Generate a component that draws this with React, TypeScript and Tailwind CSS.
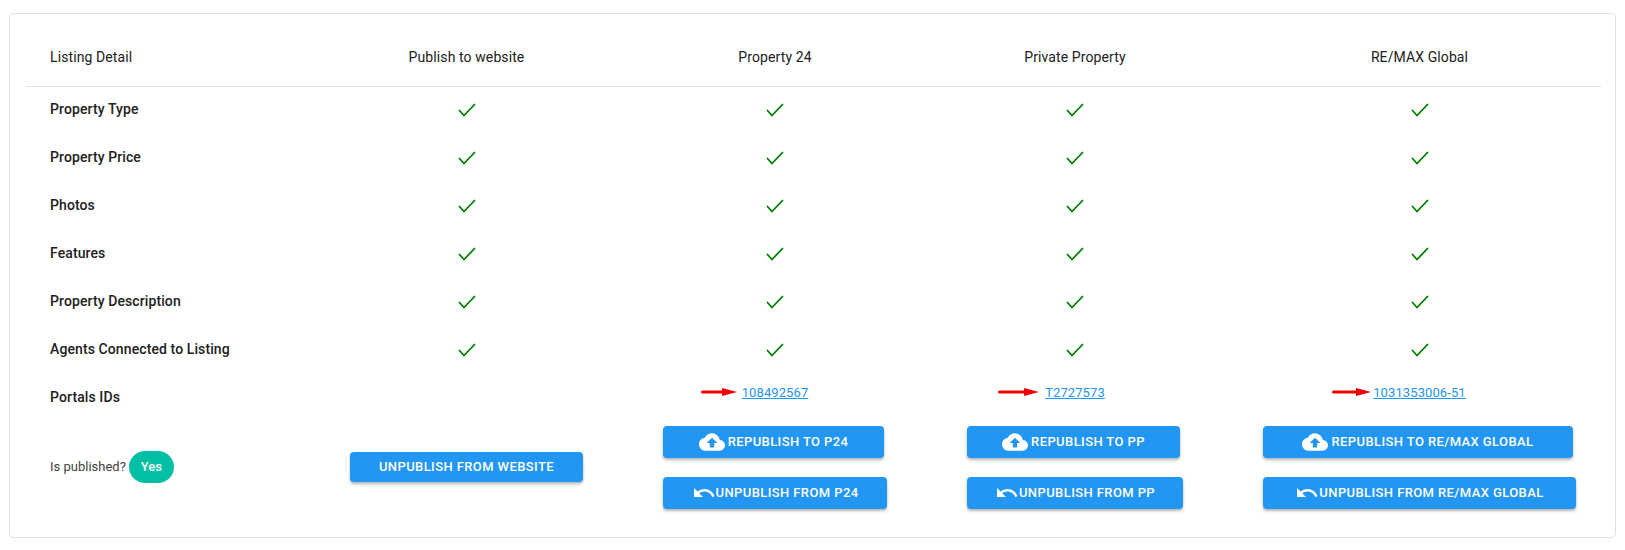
import { MdCloudUpload, MdUndo } from "react-icons/md";

const rows = [
  "Property Type",
  "Property Price",
  "Photos",
  "Features",
  "Property Description",
  "Agents Connected to Listing",
];

function CheckMark() {
  return (
    <svg width="18" height="14" viewBox="0 0 18 14" className="mx-auto block" fill="none">
      <path d="M1 7 L6 12.5 L17 1" stroke="#008000" strokeWidth="1.8" />
    </svg>
  );
}

function RedArrow({ gap, length }: { gap: string; length: number }) {
  return (
    <svg
      width={length}
      height="10"
      viewBox={`0 0 ${length} 10`}
      className={`absolute top-1/2 -translate-y-1/2 ${gap}`}
    >
      <path
        d={`M1.5 3.5 H${length - 15} V1 L${length} 5 L${length - 15} 9 V6.5 H1.5 A1.5 1.5 0 0 1 1.5 3.5 Z`}
        fill="#f00000"
      />
    </svg>
  );
}

function PortalLink({ id, gap, length }: { id: string; gap: string; length: number }) {
  return (
    <span className="relative inline-block">
      <RedArrow gap={gap} length={length} />
      <a href="#" className="text-[13px] text-[#2196f3] underline">
        {id}
      </a>
    </span>
  );
}

function ActionButton({
  label,
  icon,
  width,
}: {
  label: string;
  icon?: "cloud" | "undo";
  width: string;
}) {
  return (
    <button
      className={`flex h-[32px] items-center justify-center rounded bg-[#2196f3] text-[13px] font-medium tracking-[0.4px] text-white uppercase shadow-[0_2px_3px_rgba(0,0,0,0.3)] ${width}`}
    >
      {icon === "cloud" && <MdCloudUpload size={26} className="mr-[3px]" />}
      {icon === "undo" && <MdUndo size={24} />}
      {label}
    </button>
  );
}

export default function App() {
  return (
    <div className="bg-white pt-[13px] pr-[9px] pb-[13px] pl-[9px] font-['Roboto',sans-serif] text-[14px] tracking-[0.1px] text-[#212121]">
      <div className="h-[525px] rounded-[5px] border border-[#e0e0e0] pt-[14px] pl-[16px]">
        <table className="w-[1575px] table-fixed border-collapse">
          <colgroup>
            <col className="w-[284px]" />
            <col className="w-[313px]" />
            <col className="w-[304px]" />
            <col className="w-[296px]" />
            <col />
          </colgroup>
          <thead>
            <tr className="h-[58px] border-b border-[#e0e0e0]">
              <th className="pt-[2px] pl-[24px] text-left font-[450]">Listing Detail</th>
              <th className="pt-[2px] font-[450]">Publish to website</th>
              <th className="pt-[2px] font-[450]">Property 24</th>
              <th className="pt-[2px] font-[450]">Private Property</th>
              <th className="pt-[2px] pl-[15px] font-[450]">RE/MAX Global</th>
            </tr>
          </thead>
          <tbody>
            {rows.map((row) => (
              <tr key={row} className="h-[48px]">
                <td className="pb-[1px] pl-[24px] font-medium">{row}</td>
                <td><CheckMark /></td>
                <td><CheckMark /></td>
                <td><CheckMark /></td>
                <td className="pl-[15px]"><CheckMark /></td>
              </tr>
            ))}
            <tr className="h-[52px]">
              <td className="pb-[6px] pl-[24px] font-medium">Portals IDs</td>
              <td />
              <td className="pb-[16px] text-center">
                <PortalLink id="108492567" gap="right-[calc(100%+5px)]" length={36} />
              </td>
              <td className="pb-[16px] text-center">
                <PortalLink id="T2727573" gap="right-[calc(100%+6px)]" length={41} />
              </td>
              <td className="pb-[16px] pl-[15px] text-center">
                <PortalLink id="1031353006-51" gap="right-[calc(100%+2px)]" length={39} />
              </td>
            </tr>
            <tr>
              <td className="pb-[2px] pl-[24px]">
                <div className="flex items-center gap-[3px] text-[13px] tracking-normal text-[#424242]">
                  Is published?
                  <span className="flex h-[32px] w-[45px] items-center justify-center rounded-full bg-[#00bfa5] text-[13px] font-medium text-white">
                    Yes
                  </span>
                </div>
              </td>
              <td className="pb-[2px] pl-[40px]">
                <ActionButton label="Unpublish from website" width="w-[233px] !h-[30px]" />
              </td>
              <td className="pl-[40px]">
                <div className="flex flex-col gap-[19px]">
                  <ActionButton label="Republish to P24" icon="cloud" width="w-[221px]" />
                  <ActionButton label="Unpublish from P24" icon="undo" width="w-[224px]" />
                </div>
              </td>
              <td className="pl-[40px]">
                <div className="flex flex-col gap-[19px]">
                  <ActionButton label="Republish to PP" icon="cloud" width="w-[213px]" />
                  <ActionButton label="Unpublish from PP" icon="undo" width="w-[216px]" />
                </div>
              </td>
              <td className="pl-[40px]">
                <div className="flex flex-col gap-[19px]">
                  <ActionButton label="Republish to RE/MAX Global" icon="cloud" width="w-[310px]" />
                  <ActionButton label="Unpublish from RE/MAX Global" icon="undo" width="w-[313px]" />
                </div>
              </td>
            </tr>
          </tbody>
        </table>
      </div>
    </div>
  );
}
